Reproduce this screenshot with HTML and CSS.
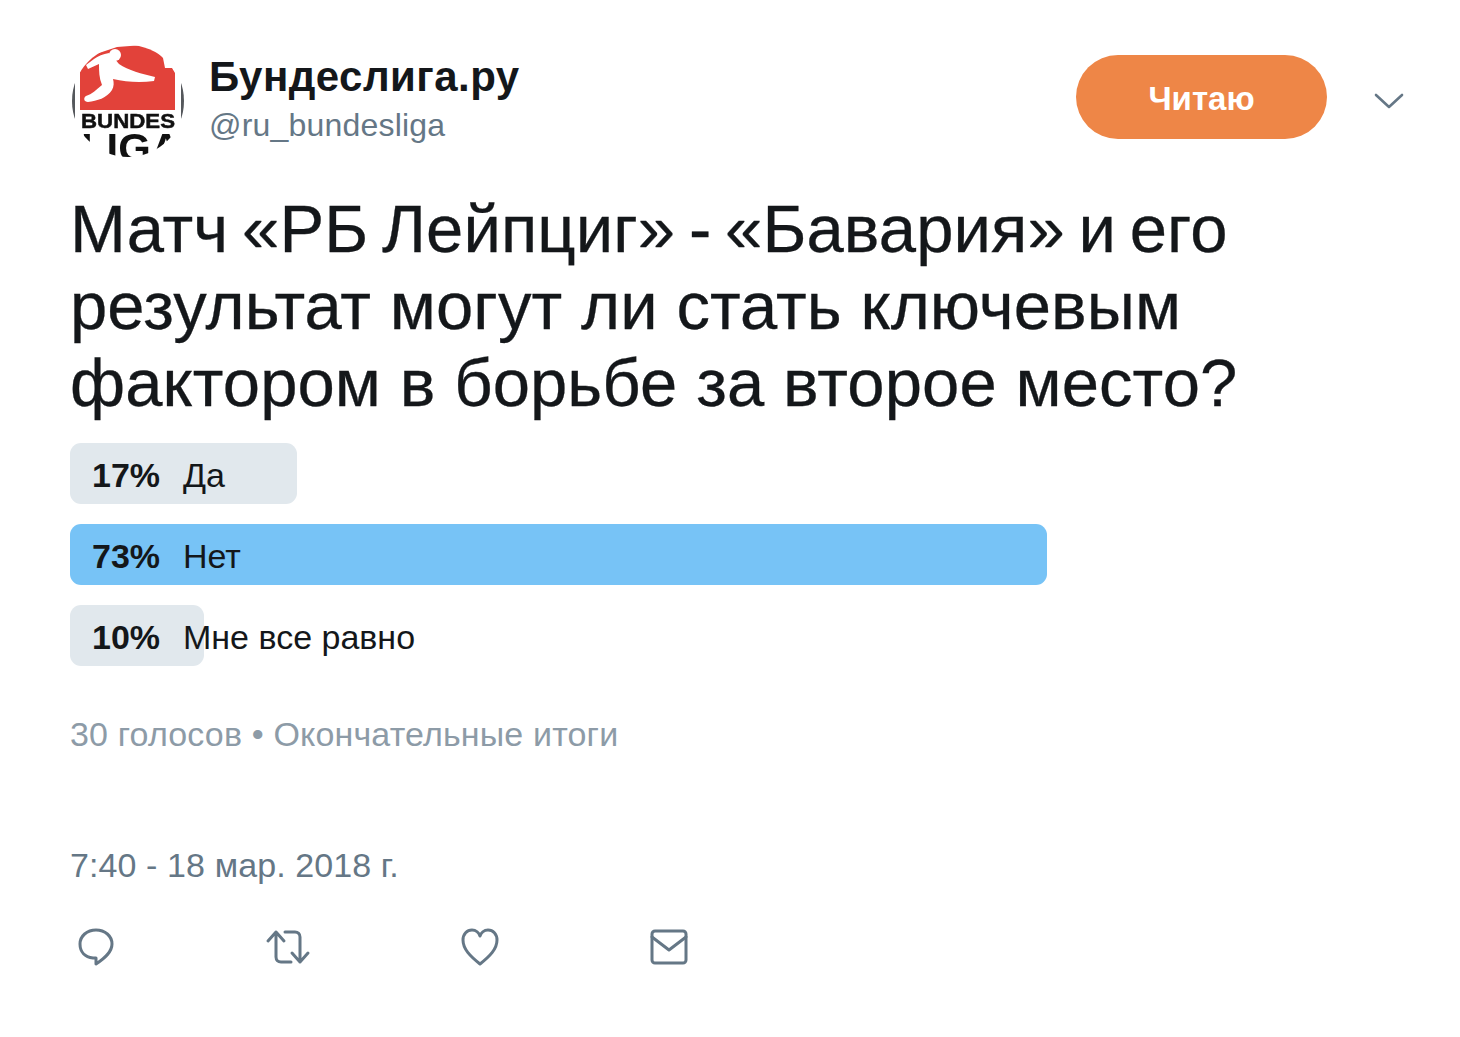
FILE: index.html
```html
<!DOCTYPE html>
<html lang="ru">
<head>
  <meta charset="UTF-8" />
  <meta name="viewport" content="width=device-width, initial-scale=1" />
  <title>Бундеслига.ру</title>
  <link rel="stylesheet" href="styles.css">
</head>
<body>

<div class="tweet">
  <div class="tweet-header">
    <!-- logo -->
    <svg class="avatar" viewBox="0 0 112 112" width="112" height="112" xmlns="http://www.w3.org/2000/svg">
      <defs>
        <clipPath id="logoClip"><circle cx="56" cy="56" r="56" /></clipPath>
      </defs>
      <g clip-path="url(#logoClip)">
        <path fill="#e2423a" d="M8 65 L8 27 Q12 16 21 10 L45 2 L71 0 Q84 4 91 13 L93 23 L100 23 L103 28 L103 65 Z" />
        <circle cx="43" cy="10" r="6" fill="#fff" />
        <path fill="#fff" d="M37 8 C31 9 26 11 22 14 L14 20 L16 24 L27 19 C27 26 27 33 30 40 C24 45 20 49 14 51 C11 53 12 57 16 57 C25 56 35 53 40 45 C42 41 42 38 41 34 C54 37 68 38 82 36 L83 32 C70 29 56 25 47 19 C45 17 43 14 42 12 Z" />
        <rect x="0" y="38" width="3" height="42" fill="#55585c" />
        <rect x="109" y="38" width="3" height="42" fill="#55585c" />
        <text class="logo-small" x="9" y="83" textLength="94" lengthAdjust="spacingAndGlyphs">BUNDES</text>
        <text class="logo-big" x="9" y="117" textLength="100" lengthAdjust="spacingAndGlyphs">LIGA</text>
      </g>
    </svg>
    <div class="names">
      <div class="fullname">Бундеслига.ру</div>
      <div class="handle">@ru_bundesliga</div>
    </div>
    <button class="follow-btn">Читаю</button>
    <svg class="caret" viewBox="0 0 30 18" width="30" height="18" xmlns="http://www.w3.org/2000/svg">
      <path d="M2 3 L15 15 L28 3" fill="none" stroke="#657786" stroke-width="2.6" stroke-linecap="round" stroke-linejoin="round" />
    </svg>
  </div>

  <p class="tweet-text">Матч «РБ Лейпциг» - «Бавария» и его результат могут ли стать ключевым фактором в борьбе за второе место?</p>

  <div class="poll">
    <div class="poll-row">
      <div class="poll-bar" style="width: 227px"></div>
      <span class="percent">17%</span><span class="choice">Да</span>
    </div>
    <div class="poll-row">
      <div class="poll-bar winner" style="width: 977px"></div>
      <span class="percent">73%</span><span class="choice">Нет</span>
    </div>
    <div class="poll-row">
      <div class="poll-bar" style="width: 134px"></div>
      <span class="percent">10%</span><span class="choice">Мне все равно</span>
    </div>
  </div>
  <div class="poll-info">30 голосов • Окончательные итоги</div>

  <div class="timestamp">7:40 - 18 мар. 2018 г.</div>

  <div class="actions">
    <svg viewBox="0 0 40 40" width="40" height="40" xmlns="http://www.w3.org/2000/svg">
      <path d="M20 3 C29 3 36 9 36 17 C36 25 29 31 20 37 L20 31 L17 31 C9 30 4 25 4 17 C4 9 11 3 20 3 Z" />
    </svg>
    <svg viewBox="0 0 46 40" width="46" height="40" xmlns="http://www.w3.org/2000/svg">
      <path d="M3 14 L11 5 L19 14 M11 5 L11 30 C11 33 13 35 16 35 L26 35" />
      <path d="M43 26 L35 35 L27 26 M35 35 L35 10 C35 7 33 5 30 5 L20 5" />
    </svg>
    <svg viewBox="0 0 40 40" width="40" height="40" xmlns="http://www.w3.org/2000/svg">
      <path d="M20 37 C10 29 3 22 3 13 C3 7 7 3 12 3 C16 3 19 6 20 9 C21 6 24 3 28 3 C33 3 37 7 37 13 C37 22 30 29 20 37 Z" />
    </svg>
    <svg viewBox="0 0 40 40" width="40" height="40" xmlns="http://www.w3.org/2000/svg">
      <rect x="3" y="4" width="34" height="32" rx="3" />
      <path d="M3 10 L20 23 L37 10" />
    </svg>
  </div>
</div>

</body>
</html>
```

FILE: styles.css
```css
body {
  margin: 0;
  background: #fff;
  font-family: "Liberation Sans", Arial, sans-serif;
  color: #14171a;
}

.tweet {
  width: 1334px;
  padding: 45px 56px 0 70px;
}

.tweet-header {
  display: flex;
  align-items: center;
  height: 112px;
}

.avatar {
  margin-left: 2px;
  flex-shrink: 0;
  filter: blur(0.6px);
}

.logo-small {
  font: bold 21px "Liberation Sans", Arial, sans-serif;
  fill: #111;
  stroke: #111;
  stroke-width: 0.5;
}

.logo-big {
  font: bold 40px "Liberation Sans", Arial, sans-serif;
  fill: #111;
}

.names {
  margin-left: 25px;
  flex: 1;
}

.fullname {
  font-size: 42px;
  font-weight: bold;
  letter-spacing: 0.45px;
  line-height: 48px;
}

.handle {
  font-size: 32px;
  letter-spacing: 0.2px;
  line-height: 48px;
  color: #657786;
}

.follow-btn {
  width: 251px;
  height: 84px;
  border: 0;
  border-radius: 42px;
  padding: 4px 0 0;
  background: #ee8647;
  color: #fff;
  font-family: inherit;
  font-size: 33px;
  font-weight: bold;
  margin-top: -8px;
}

.caret {
  margin: 0 0 0 47px;
}

.tweet-text {
  margin: 33px 0 0;
  width: 1190px;
  font-size: 67px;
  letter-spacing: 0.1px;
  line-height: 77px;
  -webkit-text-stroke: 0.3px #14171a;
}

/* first line holds the wide quote marks */
.tweet-text::first-line {
  word-spacing: -5px;
}

.poll {
  margin-top: 22px;
  display: flex;
  flex-direction: column;
  gap: 20px;
}

.poll-row {
  position: relative;
  display: flex;
  align-items: center;
  box-sizing: border-box;
  height: 61px;
  padding-top: 4px;
  font-size: 34px;
}

.poll-bar {
  position: absolute;
  top: 0;
  left: 0;
  height: 100%;
  border-radius: 11px;
  background: #e1e8ed;
}

.poll-bar.winner {
  background: #77c3f6;
}

.percent {
  position: relative;
  width: 113px;
  padding-left: 22px;
  box-sizing: border-box;
  font-weight: bold;
}

.choice {
  position: relative;
}

.poll-info {
  margin-top: 44px;
  font-size: 34px;
  letter-spacing: 0.16px;
  line-height: 48px;
  color: #8d9ba7;
}

.timestamp {
  margin-top: 83px;
  font-size: 34px;
  letter-spacing: 0.1px;
  line-height: 48px;
  color: #657786;
}

.actions {
  display: flex;
  gap: 149px;
  margin: 38px 0 0 6px;
}

.actions svg {
  fill: none;
  stroke: #657786;
  stroke-width: 3;
  stroke-linejoin: round;
  stroke-linecap: round;
}
```
